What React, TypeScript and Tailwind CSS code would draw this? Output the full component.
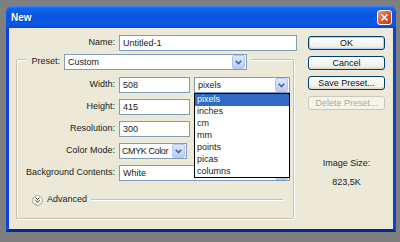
import React from "react";

const Arrow = ({ h = 14 }: { h?: number }) => (
  <div
    className="w-[13px] shrink-0 mr-[1px] rounded-[2px] bg-[linear-gradient(to_bottom,#dce7fd,#b9cdf6)] border border-[#b2c6f2] flex items-center justify-center"
    style={{ height: h }}
  >
    <svg width="7" height="5" viewBox="0 0 7 5">
      <path d="M0.7 0.8 L3.5 3.6 L6.3 0.8" stroke="#4d6185" strokeWidth="1.5" fill="none" />
    </svg>
  </div>
);

const Select = ({ text, w, tight }: { text: string; w: string; tight?: boolean }) => (
  <div className={`${w} h-[16px] border border-[#7f9db9] bg-white flex items-center`}>
    <span
      className={
        tight
          ? "flex-1 min-w-0 pl-[2px] leading-none whitespace-nowrap overflow-hidden tracking-[-0.4px]"
          : "flex-1 min-w-0 pl-[3px] leading-none whitespace-nowrap overflow-hidden"
      }
    >
      {text}
    </span>
    <Arrow />
  </div>
);

const Input = ({ text, w }: { text: string; w: string }) => (
  <div className={`${w} h-[16px] border border-[#7f9db9] bg-white flex items-center pl-[3px] leading-none whitespace-nowrap`}>
    {text}
  </div>
);

const Button = ({ label, def, disabled }: { label: string; def?: boolean; disabled?: boolean }) => (
  <div
    className={
      disabled
        ? "h-[14px] rounded-[3px] border border-[#c9c7ba] bg-[#f5f4ea] text-[#aca899] flex items-center justify-center leading-none"
        : def
        ? "h-[14px] rounded-[3px] border border-[#003c74] bg-[linear-gradient(to_bottom,#ffffff,#f0f0ea_80%,#d8d4ca)] shadow-[inset_0_0_0_1px_#b8cff3] text-[#111] flex items-center justify-center leading-none"
        : "h-[14px] rounded-[3px] border border-[#003c74] bg-[linear-gradient(to_bottom,#ffffff,#f0f0ea_80%,#d8d4ca)] text-[#111] flex items-center justify-center leading-none"
    }
  >
    {label}
  </div>
);

export default function App() {
  const units = ["pixels", "inches", "cm", "mm", "points", "picas", "columns"];
  return (
    <div className="w-[400px] h-[242px] bg-[#7f7f7f] overflow-hidden pt-[6px] pl-[6px] font-['Liberation_Sans',Arial,sans-serif] text-[9px] text-[#1a1a1a]">
      <div className="w-[390px] h-[226px] flex flex-col rounded-t-[6px] overflow-hidden">
        {/* Title bar */}
        <div className="h-[22px] flex items-center justify-between pl-[5px] pr-[4px] bg-[linear-gradient(to_bottom,#3d86f5_0%,#1462ea_12%,#0656e3_45%,#0a58e6_85%,#0b47cc_100%)]">
          <span className="text-white font-bold text-[10px] [text-shadow:1px_1px_0_#0a3aa8]">New</span>
          <div className="w-[15px] h-[15px] rounded-[3px] border border-white bg-[linear-gradient(135deg,#ee9a7c,#d9552d_55%,#c13f1a)] flex items-center justify-center">
            <svg width="9" height="9" viewBox="0 0 9 9">
              <path d="M1.5 1.5 L7.5 7.5 M7.5 1.5 L1.5 7.5" stroke="#fff" strokeWidth="1.6" />
            </svg>
          </div>
        </div>
        {/* Body */}
        <div className="flex-1 bg-[#ece9d8] border-l-[3px] border-r-[3px] border-b-[3px] border-l-[#0b44d4] border-r-[#0b44d4] border-b-[#06279a] flex pt-[7px]">
          <div className="w-[288px] flex flex-col">
            <div className="flex items-center h-[16px]">
              <span className="w-[106px] text-right">Name:</span>
              <div className="ml-[4px]">
                <Input text="Untitled-1" w="w-[178px]" />
              </div>
            </div>
            {/* Group box */}
            <div className="ml-[7px] mt-[8px] w-[278px] h-[160px] border border-[#c6c3b3] rounded-[2px] shadow-[inset_1px_1px_0_#fff,1px_1px_0_#fff] flex flex-col">
              <div className="-mt-[6px] ml-[9px] self-start flex items-center bg-[#ece9d8] pr-[4px]">
                <span className="w-[34px] text-right">Preset:</span>
                <div className="ml-[4px]">
                  <Select text="Custom" w="w-[183px]" />
                </div>
              </div>
              <div className="mt-[7px] flex flex-col gap-[6px]">
                <div className="flex items-center">
                  <span className="w-[98px] text-right">Width:</span>
                  <div className="ml-[4px]">
                    <Input text="508" w="w-[71px]" />
                  </div>
                  <div className="ml-[4px] relative">
                    <Select text="pixels" w="w-[96px]" />
                    <div className="absolute left-0 top-[16px] w-[96px] h-[85px] bg-white border border-black z-10 flex flex-col">
                      {units.map((u, i) => (
                        <div
                          key={u}
                          className={
                            i === 0
                              ? "h-[12px] bg-[#316ac5] text-white pl-[2px] flex items-center leading-none"
                              : "h-[12px] pl-[2px] flex items-center leading-none"
                          }
                        >
                          {u}
                        </div>
                      ))}
                    </div>
                  </div>
                </div>
                <div className="flex items-center">
                  <span className="w-[98px] text-right">Height:</span>
                  <div className="ml-[4px]">
                    <Input text="415" w="w-[71px]" />
                  </div>
                </div>
                <div className="flex items-center">
                  <span className="w-[98px] text-right">Resolution:</span>
                  <div className="ml-[4px]">
                    <Input text="300" w="w-[71px]" />
                  </div>
                </div>
                <div className="flex items-center">
                  <span className="w-[98px] text-right">Color Mode:</span>
                  <div className="ml-[4px]">
                    <Select text="CMYK Color" w="w-[68px]" tight />
                  </div>
                </div>
                <div className="flex items-center">
                  <span className="w-[98px] text-right whitespace-nowrap">Background Contents:</span>
                  <div className="ml-[4px]">
                    <Select text="White" w="w-[171px]" />
                  </div>
                </div>
              </div>
              <div className="mt-[13px] h-[12px] flex items-center">
                <div className="ml-[15px] w-[11px] h-[11px] rounded-full border border-[#a9a79b] bg-[linear-gradient(to_bottom,#ffffff,#e6e3d6)] flex items-center justify-center">
                  <svg width="5" height="6" viewBox="0 0 5 6">
                    <path d="M0.5 0.5 L2.5 2.5 L4.5 0.5 M0.5 3.2 L2.5 5.2 L4.5 3.2" stroke="#333" strokeWidth="1" fill="none" />
                  </svg>
                </div>
                <span className="ml-[4px]">Advanced</span>
                <div className="flex-1 ml-[4px] mr-[10px] h-[2px] border-t border-[#c6c3b3] border-b border-b-white" />
              </div>
            </div>
          </div>
          {/* Right column */}
          <div className="ml-[11px] w-[77px] flex flex-col pt-[1px]">
            <div className="flex flex-col gap-[6px]">
              <Button label="OK" def />
              <Button label="Cancel" />
              <Button label="Save Preset..." />
              <Button label="Delete Preset..." disabled />
            </div>
            <div className="mt-[47px] text-center leading-[12px]">Image Size:</div>
            <div className="mt-[7px] text-center leading-[12px]">823,5K</div>
          </div>
        </div>
      </div>
    </div>
  );
}
